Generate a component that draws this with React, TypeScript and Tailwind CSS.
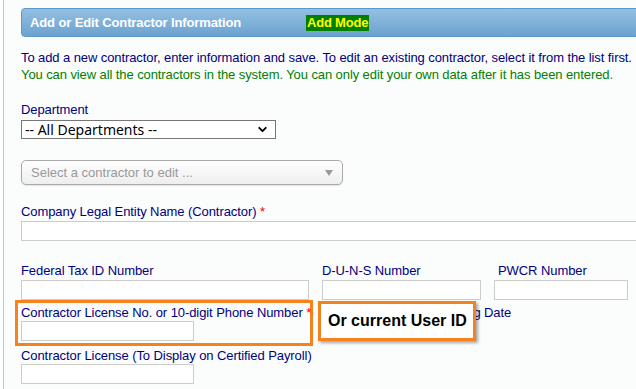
import { ChevronDown } from 'lucide-react'

// ─── Campos ───────────────────────────────────────────────────
function Label({ text, required }: { text: string; required?: boolean }) {
  return (
    <div className="text-[13px] leading-[16px] tracking-[-0.08px] text-[#000080] whitespace-nowrap">
      {text}
      {required && <span className="text-[#ff0000]"> *</span>}
    </div>
  )
}

function TextBox({ className = '' }: { className?: string }) {
  return (
    <div className={`h-[20px] border border-[#cccccc] bg-white ${className}`} />
  )
}

export default function App() {
  return (
    <div
      className="relative flex w-[636px] h-[389px] overflow-hidden bg-white"
      style={{ fontFamily: '"Liberation Sans", Arial, sans-serif' }}
    >
      <div className="w-[3px] shrink-0 bg-white" />
      <div className="flex-1 min-w-0 border-l border-[#a9cbe6] bg-[#fbfcfc] pl-[17px]">
        {/* Header */}
        <div className="mt-[8px] -mr-[20px] flex h-[29px] items-center rounded-l-[4px] border border-[#5c97ca] bg-gradient-to-b from-[#94c0e2] to-[#6ba2d0] pl-[8px]">
          <span className="w-[276px] text-[13px] font-bold tracking-[-0.12px] text-white">
            Add or Edit Contractor Information
          </span>
          <span className="bg-[#008000] px-[1px] text-[13px] font-bold leading-[16px] tracking-[-0.2px] text-[#ffff00]">
            Add Mode
          </span>
        </div>

        {/* Texto */}
        <div className="mt-[12px] text-[13px] leading-[17px] tracking-[-0.09px] whitespace-nowrap">
          <div className="text-[#000080]">
            To add a new contractor, enter information and save. To edit an existing contractor, select it from the list first.
          </div>
          <div className="text-[#008000]">
            You can view all the contractors in the system. You can only edit your own data after it has been entered.
          </div>
        </div>

        {/* Department */}
        <div className="mt-[19px]">
          <Label text="Department" />
          <div
            className="mt-[2px] flex h-[19px] w-[255px] items-center justify-between border border-[#767676] bg-white pl-[3px] pr-[6px] text-[14px] text-black"
            style={{ fontFamily: '"Noto Sans", "Open Sans", sans-serif' }}
          >
            <span className="leading-none">-- All Departments --</span>
            <ChevronDown size={13} strokeWidth={3.5} />
          </div>
        </div>

        {/* Contractor select */}
        <div className="mt-[21px] flex h-[25px] w-[322px] items-center justify-between rounded-[5px] border border-[#aaaaaa] bg-gradient-to-b from-white to-[#eeeeee] pl-[9px] pr-[9px] text-[13px] text-[#999999] shadow-[0_1px_1px_rgba(0,0,0,0.1)]">
          <span>Select a contractor to edit ...</span>
          <span className="h-0 w-0 border-x-[4px] border-t-[6px] border-x-transparent border-t-[#999999]" />
        </div>

        {/* Company */}
        <div className="mt-[19px]">
          <Label text="Company Legal Entity Name (Contractor)" required />
          <TextBox className="mt-[1px] -mr-[20px]" />
        </div>

        {/* Fila de números */}
        <div className="mt-[22px] flex">
          <div className="w-[301px]">
            <Label text="Federal Tax ID Number" />
            <TextBox className="mt-[1px] w-[288px]" />
          </div>
          <div className="w-[172px]">
            <Label text="D-U-N-S Number" />
            <TextBox className="mt-[1px] w-[159px]" />
          </div>
          <div>
            <div className="pl-[4px]">
              <Label text="PWCR Number" />
            </div>
            <TextBox className="mt-[1px] w-[134px]" />
          </div>
        </div>

        {/* Licencia */}
        <div className="flex">
          <div className="-ml-[6px] w-[298px] border-[3px] border-[#f5821f] pl-[3px] pt-[2px] pb-[2px]">
            <Label text="Contractor License No. or 10-digit Phone Number" required />
            <TextBox className="w-[173px]" />
          </div>
          <div className="ml-[10px] pt-[5px]">
            <Label text="Contractor License Expiring Date" />
          </div>
        </div>

        <div className="mt-[2px]">
          <Label text="Contractor License (To Display on Certified Payroll)" />
          <TextBox className="w-[173px]" />
        </div>
      </div>

      {/* Tooltip */}
      <div className="absolute left-[318px] top-[301px] flex h-[40px] w-[158px] items-center border-[3px] border-[#f5821f] bg-white pl-[7px] text-[16px] font-bold text-black shadow-[2px_2px_3px_rgba(0,0,0,0.35)]">
        Or current User ID
      </div>
    </div>
  )
}
